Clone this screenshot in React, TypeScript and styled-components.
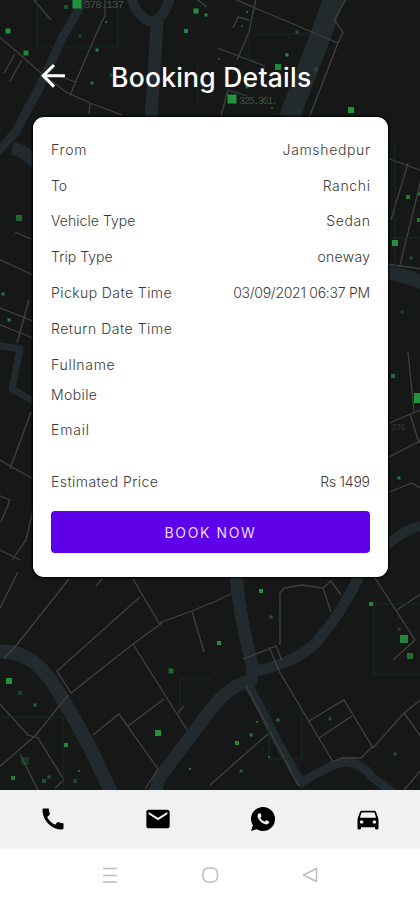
import React from "react";
import styled, { createGlobalStyle } from "styled-components";

const Global = createGlobalStyle`
  body { margin: 0; background: #fff; font-family: Inter, "Open Sans", sans-serif; }
  * { box-sizing: border-box; }
`;

const Screen = styled.div`
  width: 420px;
  height: 900px;
  display: flex;
  flex-direction: column;
  overflow: hidden;
`;

const Main = styled.main`
  position: relative;
  isolation: isolate;
  height: 790px;
  padding: 0 32px 0 33px;
  background: #161717;
  border-bottom: 1px solid #050505;
`;

const MapCanvas = styled.svg`
  position: absolute;
  inset: 0;
  z-index: -1;
`;

const Header = styled.header`
  height: 117px;
  padding: 60px 0 0 5px;
  display: flex;
  align-items: flex-start;
`;

const BackButton = styled.button`
  width: 30px;
  height: 30px;
  padding: 0;
  border: 0;
  background: none;
  svg { display: block; }
`;

const Title = styled.h1`
  margin: 0 0 0 43px;
  font-size: 26.5px;
  line-height: 34px;
  font-weight: 500;
  letter-spacing: 0.24px;
  color: #fff;
  white-space: nowrap;
`;

const Card = styled.section`
  height: 460px;
  padding: 15px 18px 0;
  background: #fff;
  border-radius: 11px;
  box-shadow: 0 0 2px 1px #000;
`;

const Row = styled.div<{ $h?: number }>`
  height: ${(p) => p.$h ?? 35.8}px;
  display: flex;
  justify-content: space-between;
  align-items: center;
`;

const Label = styled.span<{ $track?: number }>`
  font-size: 14px;
  font-weight: 300;
  line-height: 20px;
  color: #3a3a3a;
  white-space: nowrap;
  letter-spacing: ${(p) => p.$track ?? 0}px;
`;

const Value = styled(Label)`
  margin-right: ${(p) => -(p.$track ?? 0)}px;
`;

const BookButton = styled.button`
  display: block;
  width: 319px;
  height: 42px;
  padding: 0;
  border: 0;
  border-radius: 4px;
  background: #5f00eb;
  color: #e9dcff;
  font: 400 14px/41px Inter, sans-serif;
  letter-spacing: 1.6px;
`;

const TabBar = styled.nav`
  height: 59px;
  padding-bottom: 1px;
  display: grid;
  grid-template-columns: repeat(4, 1fr);
  place-items: center;
  background: #f1f1f1;
`;

const SystemBar = styled.div`
  height: 51px;
  padding: 0 98px;
  display: flex;
  justify-content: space-between;
  align-items: center;
`;

const SystemIcon = styled.svg`
  width: 24px;
  height: 24px;
  fill: none;
  stroke: #bababa;
  stroke-width: 1.4;
`;

type Entry = { label: string; value?: string; h?: number; lt?: number; vt?: number };

const entries: Entry[] = [
  { label: "From", value: "Jamshedpur", lt: 0.8, vt: 0.65 },
  { label: "To", value: "Ranchi", lt: 0, vt: 0.65 },
  { label: "Vehicle Type", value: "Sedan", lt: 0.05, vt: 0.6 },
  { label: "Trip Type", value: "oneway", lt: 0.05, vt: 0.3 },
  { label: "Pickup Date Time", value: "03/09/2021 06:37 PM", lt: 0.42, vt: -0.28 },
  { label: "Return Date Time", lt: 0.52 },
  { label: "Fullname", lt: 0.7 },
  { label: "Mobile", h: 24.6, lt: 0.4 },
  { label: "Email", h: 46.4, lt: 0.8 },
  { label: "Estimated Price", value: "Rs 1499", h: 57.8, lt: 0.45, vt: -0.25 },
];

const tabIcons = [
  "M20.01 15.38c-1.23 0-2.42-.2-3.53-.56-.35-.12-.74-.03-1.01.24l-1.57 1.97c-2.83-1.35-5.48-3.9-6.89-6.83l1.95-1.66c.27-.28.35-.67.24-1.02-.37-1.11-.56-2.3-.56-3.53 0-.54-.45-.99-.99-.99H4.19C3.65 3 3 3.24 3 3.99 3 13.28 10.73 21 20.01 21c.71 0 .99-.63.99-1.18v-3.45c0-.54-.45-.99-.99-.99z",
  "M20 4H4c-1.1 0-1.99.9-1.99 2L2 18c0 1.1.9 2 2 2h16c1.1 0 2-.9 2-2V6c0-1.1-.9-2-2-2zm0 4l-8 5-8-5V6l8 5 8-5v2z",
  "M16.75 13.96c.25.13.41.2.46.3.06.11.04.61-.21 1.18-.2.56-1.24 1.1-1.7 1.12-.46.02-.47.36-2.96-.73-2.49-1.09-3.99-3.75-4.11-3.92-.12-.17-.96-1.38-.92-2.61.05-1.22.69-1.8.95-2.04.24-.26.51-.29.68-.26h.47c.15 0 .36-.06.55.45l.69 1.87c.06.13.1.28.01.44l-.27.41-.39.42c-.12.12-.26.25-.12.5.12.26.62 1.09 1.32 1.78.91.88 1.71 1.17 1.95 1.3.24.14.39.12.54-.04l.81-.94c.19-.25.35-.19.58-.11l1.67.88M12 1.7A10.3 10.3 0 0 1 22.3 12 10.3 10.3 0 0 1 12 22.3c-1.97 0-3.8-.57-5.35-1.55L1.7 22.3l1.6-4.95A10.3 10.3 0 0 1 1.7 12 10.3 10.3 0 0 1 12 1.7",
  "M18.92 6.01C18.72 5.42 18.16 5 17.5 5h-11c-.66 0-1.21.42-1.42 1.01L3 12v8c0 .55.45 1 1 1h1c.55 0 1-.45 1-1v-1h12v1c0 .55.45 1 1 1h1c.55 0 1-.45 1-1v-8l-2.08-5.99zM6.5 16c-.83 0-1.5-.67-1.5-1.5S5.67 13 6.5 13s1.5.67 1.5 1.5S7.33 16 6.5 16zm11 0c-.83 0-1.5-.67-1.5-1.5s.67-1.5 1.5-1.5 1.5.67 1.5 1.5-.67 1.5-1.5 1.5zM5 11l1.5-4.5h11L19 11H5z",
];

// Rivers: [path, width]
const rivers: [string, number][] = [
  ["M85 -3Q76 15 62 38L50 65L36 94L15 133L-3 152", 9],
  ["M131 -4Q135 15 151 22Q166 17 170 -4", 10],
  ["M157 20L155 60L151 118", 13],
  ["M335 -5L319 40L289 118", 21],
  ["M12 148Q23 150 35 162", 13],
  ["M-3 345L20 349L12 389L33 401", 7],
  ["M387 272Q405 275 423 283", 14],
  ["M387 545Q403 530 423 525", 10],
  ["M-5 652Q35 646 63 700Q82 731 96 760L111 792", 14],
  ["M236 576Q240 620 253 668L251 681Q231 684 211 709L160 777L155 792", 13],
  ["M253 672Q302 661 320 638Q342 612 359 576", 11],
  ["M247 682Q262 710 276 739L301 783Q332 763 346 762Q362 763 373 778L394 793", 9],
];

const roads =
  "M-2 36L15 50L41 73L66 92L90 103L122 115M15 54L4 73M22 60L10 81M105 0L105 16L101 23L73 88L70 96M54 74L75 82M34 0L51 20M90 104L89 114M195 -2L207 7M256 -2L249 32L237 60M227 -4L338 43L343 32L334 20L348 -4M217 48L265 66M338 43L309 118M220 119L228 90L247 96M233 28L238 17L249 20" +
  "M387 158L422 171M408 163L391 220M422 176L400 265M387 264L422 269M408 352L414 411M387 424L422 409M410 414L419 443M387 458L422 440M387 493L412 483L422 489" +
  "M15 232L31 239M-2 259L33 275M-2 307L33 321M-2 324L33 338M29 300L17 343M31 412L10 469M-2 459L33 479M-2 495L10 500L1 522M-2 549L20 560M33 510L26 540L12 560" +
  "M18 572L0 608M69 579L15 647L4 658M102 579L96 586M133 579L159 623L192 611L211 603M140 597L57 671L71 693L133 644L162 623M192 611L204 652M133 644L187 730M93 735L119 714L158 769L145 789M128 726L164 699M-2 702L28 735L38 738L64 780L55 788M68 695L36 735L-2 768M20 754L38 790M178 713L184 706" +
  "M210 604L231 594M323 588L331 581L341 595M280 645L280 593L284 588L302 585L323 588L331 612M243 659L276 646L282 661M269 647L279 671L333 762M309 721L344 700L373 748L404 713L423 698M319 738L352 716M404 713L422 738M332 762L342 758L361 758L373 746M210 785L269 733M246 686L299 786M375 578L415 640L393 660M397 610L422 593M404 790L422 769";

const zones =
  "M37 0V47H118V0M248 34H311M249 34V60M198 60V105M63 717H-2M63 717V790M180 679V720M269 700V759H302V710M180 679H211M374 604H422M374 604V674H422M387 238H422M395 140V270";

// Markers: [centre x, centre y, size, opacity]
const markers: [number, number, number, number][] = [
  [77, 4, 9, 1], [66, 7, 4, 0.5], [8, 31, 5, 1], [26, 53, 5, 0.9], [106, 22, 2, 0.7], [80, 36, 3, 0.4], [97, 50, 3, 0.9], [92, 83, 3, 0.8], [111, 75, 3, 0.5],
  [196, 11, 5, 1], [206, 15, 3, 0.9], [186, 31, 4, 0.9], [247, 12, 2, 0.7], [242, 26, 2, 0.5], [297, 32, 3, 0.6], [287, 55, 3, 1], [278, 67, 6, 0.9], [219, 59, 2, 0.5], [247, 87, 3, 0.7], [232, 99, 9, 1], [272, 108, 2, 0.6], [351, 110, 6, 1],
  [19, 218, 6, 0.65], [3, 294, 3, 0.8], [9, 320, 3, 0.9], [408, 197, 4, 0.8], [419, 194, 3, 0.7], [419, 220, 4, 0.8], [395, 243, 6, 1], [411, 258, 3, 0.5], [402, 312, 3, 0.4], [393, 376, 4, 0.7], [419, 398, 10, 1], [399, 478, 3, 0.8],
  [9, 681, 6, 1], [20, 693, 4, 0.35], [35, 705, 3, 0.7], [66, 745, 4, 0.9], [13, 778, 4, 0.8], [25, 761, 8, 0.25], [79, 771, 2, 0.7], [75, 781, 4, 0.4], [44, 781, 4, 0.5], [49, 777, 3, 0.6], [171, 671, 5, 0.65], [158, 733, 6, 1], [190, 769, 2, 0.8],
  [261, 591, 4, 1], [271, 617, 3, 0.6], [219, 643, 4, 1], [371, 604, 4, 0.9], [404, 639, 8, 0.9], [410, 656, 6, 0.7], [399, 629, 3, 0.4], [257, 722, 2, 0.7], [278, 720, 3, 0.7], [251, 735, 3, 0.8], [237, 743, 4, 0.9], [241, 771, 3, 0.6], [269, 757, 2, 0.6], [330, 719, 3, 0.5], [395, 754, 3, 0.5],
];

function CityMap() {
  return (
    <MapCanvas width="420" height="790" viewBox="0 0 420 790">
      <defs>
        <filter id="haze"><feGaussianBlur stdDeviation="0.5" /></filter>
      </defs>
      <rect width="420" height="790" fill="#161717" />
      <g filter="url(#haze)">
        <g fill="none" stroke="#20292d">
          {rivers.map(([d, w]) => <path key={d} d={d} strokeWidth={w} strokeLinejoin="round" />)}
        </g>
        <path d={roads} fill="none" stroke="#404040" strokeWidth="1.3" />
        <path d={zones} fill="none" stroke="#1a2a22" strokeWidth="1" />
        <g fill="#22923e">
          {markers.map(([x, y, s, o]) => (
            <rect key={`${x}-${y}`} x={x - s / 2} y={y - s / 2} width={s} height={s} opacity={o} />
          ))}
        </g>
        <g fill="#3d5545" fontFamily="Liberation Mono, monospace" fontSize="11">
          <text x="84" y="8" textLength="40">378.137</text>
          <text x="239" y="104" textLength="39" fontSize="10">325.361.</text>
          <text x="313" y="72" fontSize="8">4</text>
          <text x="391" y="430" textLength="15" fontSize="9" opacity=".6">376</text>
        </g>
      </g>
    </MapCanvas>
  );
}

export default function App() {
  return (
    <Screen>
      <Global />
      <Main>
        <CityMap />
        <Header>
          <BackButton aria-label="Back">
            <svg width="30" height="30" viewBox="0 0 30 30" fill="none" stroke="#fff" strokeWidth="3">
              <path d="M27 15.8H5M16 5L5.2 15.8L16 26.6" />
            </svg>
          </BackButton>
          <Title>Booking Details</Title>
        </Header>
        <Card>
          {entries.map((e) => (
            <Row key={e.label} $h={e.h}>
              <Label $track={e.lt}>{e.label}</Label>
              {e.value && <Value $track={e.vt}>{e.value}</Value>}
            </Row>
          ))}
          <BookButton>BOOK NOW</BookButton>
        </Card>
      </Main>
      <TabBar>
        {tabIcons.map((d) => (
          <svg key={d} width="28" height="28" viewBox="0 0 24 24" fill="#000" fillRule="evenodd">
            <path d={d} />
          </svg>
        ))}
      </TabBar>
      <SystemBar>
        <SystemIcon viewBox="0 0 24 24"><path d="M5 5.5H19M5 12.5H19M5 19H19" /></SystemIcon>
        <SystemIcon viewBox="0 0 24 24"><rect x="5" y="5" width="14.5" height="14" rx="5.5" /></SystemIcon>
        <SystemIcon viewBox="0 0 24 24"><path d="M18.5 5.5V18.5L5.5 12Z" strokeLinejoin="round" /></SystemIcon>
      </SystemBar>
    </Screen>
  );
}
